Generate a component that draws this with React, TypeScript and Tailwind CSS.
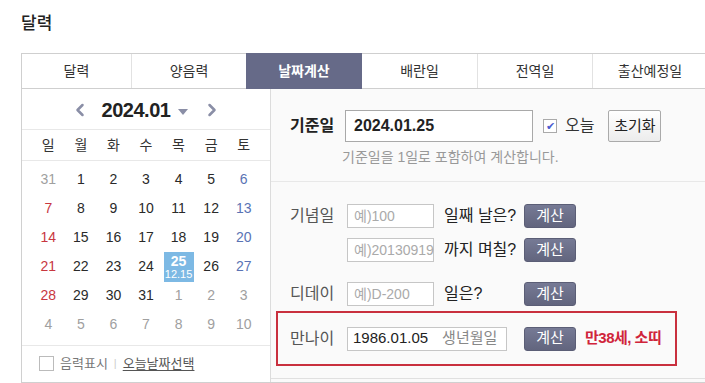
import { ChevronLeft, ChevronRight } from "lucide-react";

const font = { fontFamily: '"Liberation Sans", "Noto Sans CJK KR", sans-serif' };

const tabs = [
  { label: "달력", w: "w-[110px]" },
  { label: "양음력", w: "w-[115px]" },
  { label: "날짜계산", w: "w-[116px]", active: true },
  { label: "배란일", w: "w-[115px]" },
  { label: "전역일", w: "w-[115px]" },
  { label: "출산예정일", w: "w-[115px]" },
];

const weekdays = ["일", "월", "화", "수", "목", "금", "토"];

type Day = { d: number; muted?: boolean };

const weeks: Day[][] = [
  [{ d: 31, muted: true }, { d: 1 }, { d: 2 }, { d: 3 }, { d: 4 }, { d: 5 }, { d: 6 }],
  [{ d: 7 }, { d: 8 }, { d: 9 }, { d: 10 }, { d: 11 }, { d: 12 }, { d: 13 }],
  [{ d: 14 }, { d: 15 }, { d: 16 }, { d: 17 }, { d: 18 }, { d: 19 }, { d: 20 }],
  [{ d: 21 }, { d: 22 }, { d: 23 }, { d: 24 }, { d: 25 }, { d: 26 }, { d: 27 }],
  [{ d: 28 }, { d: 29 }, { d: 30 }, { d: 31 }, { d: 1, muted: true }, { d: 2, muted: true }, { d: 3, muted: true }],
  [4, 5, 6, 7, 8, 9, 10].map((d) => ({ d, muted: true })),
];

function dayColor(col: number, muted?: boolean) {
  if (muted) return "text-[#a0a0a0]";
  if (col === 0) return "text-[#c8373f]";
  if (col === 6) return "text-[#5a73b4]";
  return "text-[#2a2a2a]";
}

function CalcButton() {
  return (
    <button className="flex h-[24px] w-[52px] items-center justify-center rounded-[3px] border border-[#5b5e76] bg-gradient-to-b from-[#767a95] to-[#62657e] text-[15px] text-white">
      계산
    </button>
  );
}

function SmallInput({ placeholder, w = "w-[87px]" }: { placeholder: string; w?: string }) {
  return (
    <div className={`flex h-[24px] ${w} items-center border border-[#c6c6c6] bg-white px-[6px] text-[14px] text-[#aaa]`}>
      {placeholder}
    </div>
  );
}

function Calendar() {
  return (
    <div className="flex w-[249px] flex-col border-r border-[#dcdcdc] bg-white">
      <div className="flex h-[41px] items-center justify-center border-b border-[#e8e8e8] pt-[2px]">
        <ChevronLeft size={20} strokeWidth={3} className="mr-[12px] text-[#8a8ea6]" />
        <span className="text-[20px] font-bold tracking-[-0.5px] text-[#222]">2024.01</span>
        <span className="ml-[8px] mr-[14px] mt-[3px] h-0 w-0 border-x-[5px] border-t-[6px] border-x-transparent border-t-[#8a8ea6]" />
        <ChevronRight size={20} strokeWidth={3} className="text-[#8a8ea6]" />
      </div>
      <div className="grid h-[31px] grid-cols-7 items-center border-b border-[#e8e8e8] px-[10px] text-[14px] text-[#333]">
        {weekdays.map((w) => (
          <div key={w} className="text-center">
            {w}
          </div>
        ))}
      </div>
      <div className="flex flex-col px-[10px] pb-[6px] pt-[4px]">
        {weeks.map((row, ri) => (
          <div key={ri} className="grid h-[29px] grid-cols-7 items-center text-[14px]">
            {row.map((day, ci) =>
              ri === 3 && ci === 4 ? (
                <div key={ci} className="flex h-[29px] items-center justify-center">
                  <div className="flex h-[30px] w-[30px] flex-col items-center justify-center bg-[#7db9e4] text-white">
                    <span className="text-[14px] font-bold leading-[14px]">25</span>
                    <span className="text-[11px] leading-[12px]">12.15</span>
                  </div>
                </div>
              ) : (
                <div key={ci} className={`text-center ${dayColor(ci, day.muted)}`}>
                  {day.d}
                </div>
              )
            )}
          </div>
        ))}
      </div>
      <div className="flex h-[36px] items-center border-t border-[#e8e8e8] pl-[17px] text-[13px]">
        <span className="mr-[6px] h-[15px] w-[15px] border border-[#bbb] bg-white" />
        <span className="text-[#777]">음력표시</span>
        <span className="mx-[6px] text-[11px] text-[#ccc]">|</span>
        <span className="text-[#555] underline underline-offset-2">오늘날짜선택</span>
      </div>
    </div>
  );
}

function DateCalc() {
  return (
    <div className="flex flex-1 flex-col bg-[#fafafa]">
      <div className="flex h-[93px] flex-col border-b border-[#e8e8e8] pl-[19px] pt-[21px]">
        <div className="flex items-center">
          <span className="w-[55px] text-[16px] font-bold text-[#222]">기준일</span>
          <div className="flex h-[32px] w-[188px] items-center border border-[#a9a9a9] bg-white px-[8px] text-[16px] font-bold text-[#222]">
            2024.01.25
          </div>
          <span className="ml-[10px] flex h-[14px] w-[14px] items-center justify-center border border-[#aaa] bg-white text-[11px] leading-none text-[#4a5ccf]">
            ✔
          </span>
          <span className="ml-[8px] text-[16px] text-[#333]">오늘</span>
          <button className="ml-[14px] flex h-[32px] w-[53px] items-center justify-center rounded-[2px] border border-[#aaa] bg-gradient-to-b from-white to-[#ececec] text-[15px] text-[#222]">
            초기화
          </button>
        </div>
        <div className="ml-[52px] mt-[5px] text-[14px] text-[#999]">기준일을 1일로 포함하여 계산합니다.</div>
      </div>
      <div className="flex flex-col pt-[22px]">
        <div className="flex items-center pl-[19px]">
          <span className="w-[57px] text-[16px] text-[#555]">기념일</span>
          <SmallInput placeholder="예)100" />
          <span className="ml-[10px] w-[80px] text-[16px] text-[#222]">일째 날은?</span>
          <CalcButton />
        </div>
        <div className="mt-[10px] flex items-center pl-[76px]">
          <SmallInput placeholder="예)20130919" />
          <span className="ml-[10px] w-[80px] text-[16px] text-[#222]">까지 며칠?</span>
          <CalcButton />
        </div>
        <div className="mt-[20px] flex items-center pl-[19px]">
          <span className="w-[57px] text-[16px] text-[#555]">디데이</span>
          <SmallInput placeholder="예)D-200" />
          <span className="ml-[10px] w-[80px] text-[16px] text-[#222]">일은?</span>
          <CalcButton />
        </div>
        <div className="ml-[5px] mt-[5px] flex h-[55px] w-[401px] items-center border-2 border-[#c9303e] pl-[12px]">
          <span className="w-[57px] text-[16px] text-[#555]">만나이</span>
          <div className="flex h-[24px] w-[160px] items-center border border-[#c6c6c6] bg-white px-[5px] text-[15px] text-[#222]">
            1986.01.05
            <span className="ml-[14px] text-[#888]">생년월일</span>
          </div>
          <span className="w-[17px]" />
          <CalcButton />
          <span className="ml-[9px] text-[15px] font-bold tracking-[-0.5px] text-[#d0243a]">만38세, 소띠</span>
        </div>
        <div className="mt-[12px] border-b border-[#e0e0e0]" />
      </div>
    </div>
  );
}

export default function App() {
  return (
    <div className="h-[383px] w-[705px] overflow-hidden bg-white" style={font}>
      <div className="pl-[21px] pt-[11px]">
        <h1 className="h-[42px] text-[17px] font-medium text-[#222]">달력</h1>
        <div className="w-[690px]">
          <div className="flex h-[36px] border-y border-[#cfcfcf]">
            {tabs.map((t, i) => (
              <div
                key={t.label}
                className={`flex ${t.w} items-center justify-center text-[14px] ${
                  t.active
                    ? "-my-px bg-[#666a88] font-bold text-white"
                    : `bg-white text-[#333] ${i > 0 && !tabs[i - 1].active ? "border-l border-[#e2e2e2]" : ""} ${
                        i === 0 ? "border-l border-[#cfcfcf]" : ""
                      }`
                }`}
              >
                {t.label}
              </div>
            ))}
          </div>
          <div className="flex h-[294px] border-x border-b border-[#d0d0d0]">
            <Calendar />
            <DateCalc />
          </div>
        </div>
      </div>
    </div>
  );
}
